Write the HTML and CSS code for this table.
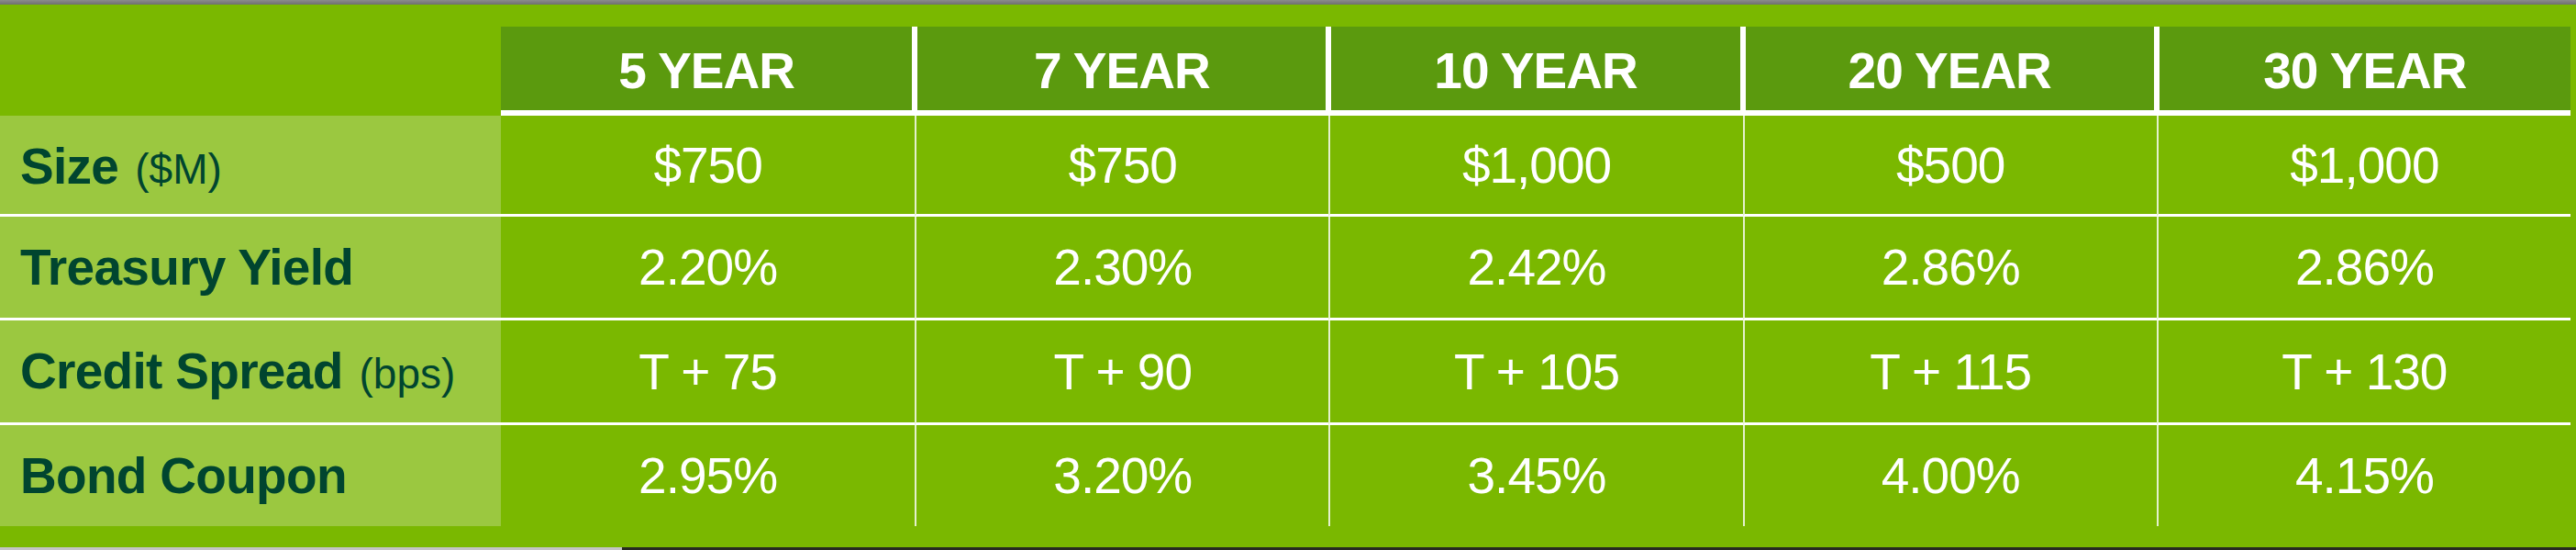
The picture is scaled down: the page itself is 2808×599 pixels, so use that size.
FILE: index.html
```html
<!DOCTYPE html>
<html lang="en">
<head>
<meta charset="utf-8">
<title>Bond Offering Summary</title>
<link rel="stylesheet" href="styles.css">
</head>
<body>
<div class="topbar"></div>
<div class="panel">
  <div class="grid">
    <div class="corner"></div>
    <div class="th first">5 YEAR</div>
    <div class="th">7 YEAR</div>
    <div class="th">10 YEAR</div>
    <div class="th">20 YEAR</div>
    <div class="th last">30 YEAR</div>

    <div class="label">Size<span class="unit">(&#36;M)</span></div>
    <div class="val first">$750</div>
    <div class="val">$750</div>
    <div class="val">$1,000</div>
    <div class="val">$500</div>
    <div class="val">$1,000</div>

    <div class="label">Treasury Yield</div>
    <div class="val first">2.20%</div>
    <div class="val">2.30%</div>
    <div class="val">2.42%</div>
    <div class="val">2.86%</div>
    <div class="val">2.86%</div>

    <div class="label">Credit Spread<span class="unit">(bps)</span></div>
    <div class="val first">T + 75</div>
    <div class="val">T + 90</div>
    <div class="val">T + 105</div>
    <div class="val">T + 115</div>
    <div class="val">T + 130</div>

    <div class="label end">Bond Coupon</div>
    <div class="val first end">2.95%</div>
    <div class="val end">3.20%</div>
    <div class="val end">3.45%</div>
    <div class="val end">4.00%</div>
    <div class="val end">4.15%</div>
  </div>
</div>
<div class="bottombar">
  <div class="bb-light"></div>
  <div class="bb-dark"></div>
</div>
</body>
</html>
```

FILE: styles.css
```css
* {
  box-sizing: border-box;
}

html, body {
  margin: 0;
  padding: 0;
}

body {
  width: 2808px;
  height: 599px;
  overflow: hidden;
  background: #7ab800;
  font-family: "Liberation Sans", Arial, Helvetica, sans-serif;
}

.topbar {
  height: 5px;
  background: linear-gradient(#8c8c8c, #6f6f6f);
}

.panel {
  background: #7ab800;
  padding: 24px 0 23px 0;
}

.grid {
  width: 2802px;
  display: grid;
  grid-template-columns: 546px repeat(5, 1fr);
  grid-template-rows: 97px 110px 113px 114px 110px;
}

.corner {
  background: transparent;
}

.th {
  background: #5b9a0e;
  color: #ffffff;
  font-weight: bold;
  font-size: 55px;
  letter-spacing: -1px;
  display: flex;
  align-items: center;
  justify-content: center;
  padding-top: 5px;
  border-bottom: 6px solid #ffffff;
  border-left: 3px solid #ffffff;
  border-right: 3px solid #ffffff;
}

.th.first {
  border-left: 0;
}

.th.last {
  border-right: 0;
}

.label {
  background: #9bc840;
  color: #00452f;
  font-weight: bold;
  font-size: 55px;
  letter-spacing: -0.7px;
  display: flex;
  align-items: baseline;
  padding-left: 22px;
  padding-top: 23px;
  border-bottom: 3px solid #ffffff;
  white-space: nowrap;
}

.unit {
  font-weight: normal;
  font-size: 46px;
  letter-spacing: 0;
  margin-left: 18px;
}

.val {
  color: #ffffff;
  font-size: 55px;
  letter-spacing: -1px;
  display: flex;
  align-items: center;
  justify-content: center;
  border-bottom: 3px solid #ffffff;
  border-left: 2px solid rgba(255, 255, 255, 0.8);
}

.val.first {
  border-left: 0;
}

.end {
  border-bottom: 0;
}

.bottombar {
  display: flex;
  height: 3px;
}

.bb-light {
  width: 678px;
  background: #c4c4c4;
}

.bb-dark {
  flex: 1;
  background: #272b21;
}
```
